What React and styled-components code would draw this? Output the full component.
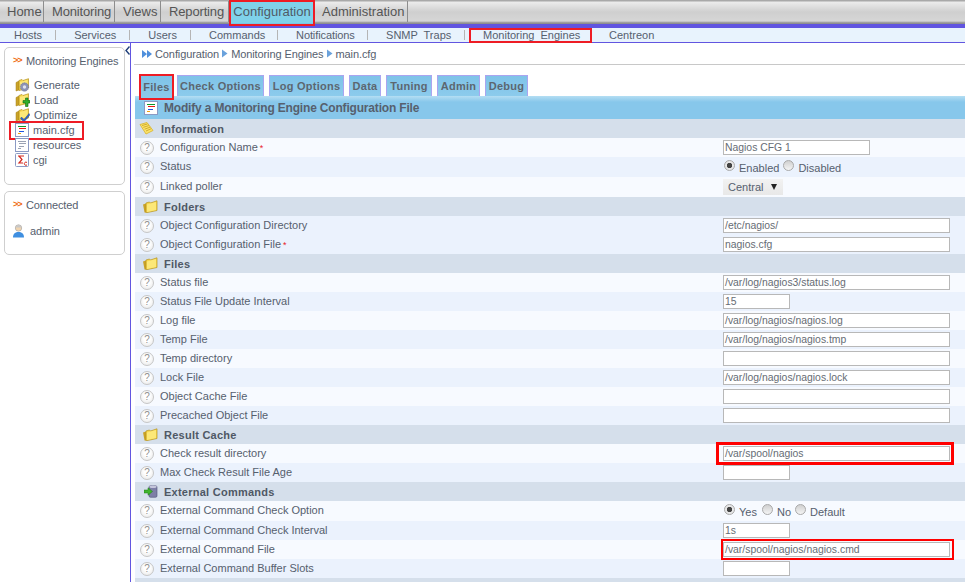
import React from "react";
import styled, { createGlobalStyle } from "styled-components";

const Global = createGlobalStyle`
  html, body { margin: 0; padding: 0; background: #fff; overflow: hidden; }
  body { font-family: "Liberation Sans", Arial, sans-serif; font-size: 11px; color: #56606e; }
  * { box-sizing: border-box; }
`;

const Page = styled.div`
  width: 965px;
  height: 582px;
  overflow: hidden;
  display: flex;
  flex-direction: column;
`;

/* top menu */
const TopBar = styled.nav`
  height: 24px;
  display: flex;
  padding-left: 7px;
  background: linear-gradient(#a9a9a9 0, #a9a9a9 1px, #ececec 2px, #cfcfcf 12px, #d6d6d6 21px, #8f8f8f 23px);
`;
const TopItem = styled.a`
  width: ${(p) => p.$w}px;
  height: 21px;
  margin: 1px 8px 0 0;
  font-size: 13px;
  line-height: 21px;
  letter-spacing: ${(p) => p.$ls ?? 0}px;
  white-space: nowrap;
  color: #555;
  border-right: 1px solid #8d8d8d;
`;
const TopActive = styled.a`
  width: 86px;
  height: 26px;
  margin: 0 7px 0 -8px;
  position: relative;
  z-index: 1;
  border: 2px solid #ee1c25;
  background: linear-gradient(#7fd2ea 0, #7fd2ea 21px, #6fb8e6 100%);
  color: #4f5a66;
  font-size: 13px;
  line-height: 20px;
  text-align: center;
`;
const Stripe = styled.div`
  height: 4px;
  background: #6155e0;
`;
const SubBar = styled.nav`
  height: 15px;
  display: flex;
  align-items: center;
  padding-left: 14px;
  background: #e8f3fd;
  border-bottom: 1px solid #6155e0;
`;
const SubItem = styled.a`
  width: ${(p) => (p.$w ? `${p.$w}px` : "auto")};
  font-size: 11px;
  letter-spacing: ${(p) => p.$ls ?? 0}px;
  color: #56606e;
  white-space: pre;
`;
const SubSep = styled.span`
  width: 1px;
  height: 10px;
  margin: 0 18px 0 13px;
  background: #b5b5b5;
`;
const SubBoxed = styled.a`
  width: 123px;
  height: 15px;
  margin: 0 17px 0 -14px;
  border: 2px solid #ee1c25;
  font-size: 11px;
  line-height: 11px;
  padding-left: 12px;
  white-space: pre;
  color: #56606e;
`;

/* body */
const Body = styled.div`
  flex: 1;
  min-height: 0;
  display: flex;
`;
const Side = styled.aside`
  width: 131px;
  flex: none;
  border-right: 1px solid #6155e0;
  padding: 4px 5px 0 4px;
  display: flex;
  flex-direction: column;
  gap: 6px;
  position: relative;
`;
const Collapse = styled.svg`
  position: absolute;
  right: 0;
  top: 3px;
`;
const Panel = styled.section`
  height: ${(p) => p.$h}px;
  border: 1px solid #cfcfcf;
  border-radius: 5px;
  padding: 5px 0 0 8px;
`;
const PanelTitle = styled.div`
  display: flex;
  align-items: center;
  gap: 5px;
  height: 15px;
  font-size: 11px;
  letter-spacing: -0.1px;
  color: #56606e;
  white-space: nowrap;
`;
const Chevrons = styled.span`
  width: 8px;
  color: #ef6a10;
  font-weight: bold;
  font-size: 9px;
  line-height: 11px;
  letter-spacing: -1px;
`;
const SideList = styled.ul`
  list-style: none;
  margin: 9px 0 0 2px;
  padding: 0;
`;
const SideItem = styled.li`
  height: 15px;
  display: flex;
  align-items: center;
  gap: 4px;
  font-size: 11px;
  color: #56606e;
  position: relative;
`;
const SideMark = styled.span`
  position: absolute;
  left: -6px;
  top: -1px;
  width: 75px;
  height: 19px;
  border: 2px solid #ee1c25;
`;
const UserRow = styled.div`
  display: flex;
  align-items: center;
  gap: 6px;
  margin: 12px 0 0 0;
  font-size: 11px;
  color: #56606e;
`;

const Main = styled.main`
  flex: 1;
  min-width: 0;
  padding-left: 3px;
`;
const Crumbs = styled.div`
  height: 22px;
  display: flex;
  align-items: center;
  gap: 3px;
  padding-left: 8px;
  border-bottom: 1px solid #c8c8c8;
  font-size: 11px;
  letter-spacing: -0.1px;
  color: #56606e;
`;
const Tabs = styled.div`
  display: flex;
  align-items: flex-start;
  gap: 5px;
  height: 31px;
  padding: 10px 0 0 5px;
  position: relative;
  z-index: 1;
`;
const Tab = styled.a`
  width: ${(p) => p.$w}px;
  height: 21px;
  background: linear-gradient(#7fc3e8, #8ccbec);
  border: 1px solid #aaa5f0;
  border-bottom: none;
  font-size: 11px;
  font-weight: bold;
  letter-spacing: 0.25px;
  line-height: 20px;
  text-align: center;
  color: #5c6670;
`;
const MarkedTab = styled(Tab)`
  height: 26px;
  margin: -1px -2px 0 0;
  border: 2px solid #ee1c25;
  line-height: 22px;
`;
const Header = styled.header`
  height: 23px;
  display: flex;
  align-items: center;
  gap: 6px;
  padding-left: 9px;
  margin-left: 1px;
  background: linear-gradient(#b4def3 0, #87c7eb 6px, #87c7eb 100%);
  font-size: 12px;
  font-weight: bold;
  letter-spacing: -0.18px;
  color: #56606e;
`;
const Form = styled.div`
  margin-left: 1px;
`;
const Section = styled.div`
  height: 19px;
  display: flex;
  align-items: center;
  background: #d5dfeb;
  font-size: 11px;
  font-weight: bold;
  color: #4f5865;
  letter-spacing: 0.25px;
`;
const SectionIcon = styled.span`
  width: ${(p) => p.$w ?? 29}px;
  padding-left: ${(p) => p.$pad ?? 8}px;
  display: flex;
`;
const Row = styled.div`
  height: ${(p) => p.$h ?? 19}px;
  display: flex;
  align-items: center;
  background: ${(p) => (p.$alt ? "#ebf2fd" : "#f7faff")};
  font-size: 11px;
  color: #56606e;
`;
const Help = styled.span`
  width: 14px;
  height: 14px;
  margin: 0 6px 0 5px;
  flex: none;
  border: 1px solid #c6c6c6;
  border-radius: 50%;
  background: radial-gradient(circle at 50% 40%, #fff 30%, #e6e6e6 100%);
  font-size: 10px;
  line-height: 12px;
  text-align: center;
  color: #909090;
`;
const Label = styled.span`
  width: 563px;
  flex: none;
  padding-bottom: 2px;
`;
const Req = styled.span`
  color: #e8222a;
  margin-left: 2px;
  font-size: 9px;
`;
const Field = styled.span`
  position: relative;
  display: block;
  width: ${(p) => p.$w}px;
  height: 15px;
  background: #fff;
  border: 1px solid #b8b8b8;
  padding-left: 1px;
  font-size: 10.4px;
  line-height: 13px;
  color: #666c74;
  white-space: nowrap;
`;
const FieldMark = styled.span`
  position: absolute;
  left: ${(p) => p.$l}px;
  right: ${(p) => p.$r}px;
  top: ${(p) => p.$t}px;
  bottom: ${(p) => p.$b}px;
  border: ${(p) => p.$bw}px solid #f00;
  pointer-events: none;
`;
const Radios = styled.span`
  display: flex;
  align-items: center;
`;
const RadioDot = styled.span`
  width: 11px;
  height: 11px;
  margin: -4px 4px 0 1px;
  flex: none;
  border-radius: 50%;
  border: 1px solid #a9a9a9;
  background: ${(p) =>
    p.$on
      ? "radial-gradient(circle, #444 0 2.4px, #e8e8e8 3px)"
      : "linear-gradient(#d0d0d0, #f4f4f4)"};
`;
const RadioText = styled.span`
  margin-right: ${(p) => p.$gap ?? 0}px;
  padding-top: 1px;
`;
const Select = styled.span`
  width: 60px;
  height: 16px;
  display: flex;
  align-items: center;
  gap: 8px;
  padding-left: 5px;
  background: linear-gradient(#f2f2f2, #e8e8e8);
  color: #56606e;
  font-size: 11px;
`;
const Caret = styled.span`
  width: 0;
  height: 0;
  border-left: 3.5px solid transparent;
  border-right: 3.5px solid transparent;
  border-top: 6px solid #222;
`;

/* icons */
const Folder = ({ badge }) => (
  <svg width="15" height="15" viewBox="0 0 15 15">
    <path d="M1 5.5 4 4v9l-3 1z" fill="#c9a227" stroke="#a5811c" strokeWidth=".5" />
    <path d="M4 3.5 7 2.5l1 1 5.5-1.8V11L4 13.5z" fill="#f8d84e" stroke="#b5921f" strokeWidth=".7" />
    <path d="M5 5l7.5-2v7L5 12z" fill="#fce878" />
    {badge === "gear" && (
      <g>
        <circle cx="9.5" cy="10" r="4.2" fill="#8d93b5" stroke="#666c8c" strokeWidth=".6" strokeDasharray="1.4 .7" />
        <circle cx="9.5" cy="10" r="1.7" fill="#dfe2ee" />
      </g>
    )}
    {badge === "plus" && (
      <path d="M8 8.5h2.5V6H13v2.5h2V11h-2v3.5h-2.5V11H8z" fill="#2fae2a" stroke="#14660f" strokeWidth=".6" />
    )}
    {badge === "check" && (
      <path d="M6.5 10l2.5 2.5L14 6.5l.8 1.5L9 15l-3.6-3.6z" fill="#2f62c9" stroke="#1b3f8c" strokeWidth=".4" />
    )}
  </svg>
);

const Doc = ({ kind }) => {
  const c =
    kind === "main"
      ? ["#0a9a2a", "#e81c10", "#1f55e0", "#f0a010"]
      : ["#9aa2b4", "#9aa2b4", "#9aa2b4", "#9aa2b4"];
  return (
    <svg width="14" height="14" viewBox="0 0 14 14" shapeRendering="crispEdges">
      <rect x=".5" y=".5" width="13" height="13" fill="#fff" stroke="#8b9ac4" />
      <rect x="3" y="3" width="8" height="1" fill={c[0]} />
      <rect x="4" y="5" width="7" height="1" fill={c[1]} />
      <rect x="4" y="8" width="5" height="1" fill={c[2]} />
      <rect x="3" y="10" width="3" height="1" fill={c[3]} />
    </svg>
  );
};

const CgiIcon = () => (
  <svg width="14" height="14" viewBox="0 0 14 14">
    <rect x=".5" y=".5" width="13" height="13" rx="1" fill="#fff" stroke="#8b9ac4" />
    <path d="M3 3h6M4 3l3 3.5L4 10h4" fill="none" stroke="#d42a20" strokeWidth="1.2" />
    <path d="M12 9.5a1.6 1.6 0 1 0 0 2.4" fill="none" stroke="#d42a20" strokeWidth="1" />
  </svg>
);

const UserIcon = () => (
  <svg width="11" height="14" viewBox="0 0 11 14">
    <circle cx="5.5" cy="4" r="3.2" fill="#f0d4b0" stroke="#a8a8a8" strokeWidth=".7" />
    <path d="M2.4 3.4A3.2 3.2 0 0 1 8.6 3.4z" fill="#c8c8c8" />
    <path d="M0 13.5C0 9.5 2.5 8 5.5 8s5.5 1.5 5.5 5.5z" fill="#3f8fe0" />
  </svg>
);

const Notes = () => (
  <svg width="15" height="13" viewBox="0 0 15 13">
    <path d="M1 2.5 8 .5l6 8-7 3.5z" fill="#fbe36a" stroke="#d8b22a" strokeWidth=".8" />
    <path d="M3 3.5l5.5-1.5M4.3 5.3l5.5-1.7M5.6 7.2l5.5-2M7 9l5-2.2" stroke="#c79f1e" strokeWidth=".8" />
  </svg>
);

const PlainFolder = () => (
  <svg width="15" height="13" viewBox="0 0 15 13">
    <path d="M0 4.5 3 3.5V12.5H1.5z" fill="#c9a227" />
    <path d="M3 3 6.5 2 7.5 3 14 .8V10.5L3 12.8z" fill="#f8d84e" stroke="#b5921f" strokeWidth=".7" />
    <path d="M4 4.5l9-2.4V10l-9 2z" fill="#fce878" />
  </svg>
);

const ExtIcon = () => (
  <svg width="14" height="13" viewBox="0 0 14 13">
    <rect x="5" y=".7" width="8" height="11.6" rx="1.5" fill="#7d7fa6" stroke="#4f5178" strokeWidth=".6" />
    <ellipse cx="9" cy="1.8" rx="3.6" ry="1.2" fill="#c5c6dc" />
    <path d="M0 5h4V2.8L8.5 6.5 4 10.2V8H0z" fill="#3fb52c" stroke="#1d7a14" strokeWidth=".5" />
  </svg>
);

const CrumbStart = () => (
  <svg width="10" height="10" viewBox="0 0 10 10">
    <path d="M0 1l5 4-5 4zM5 1l5 4-5 4z" fill="#4f8fdc" />
  </svg>
);
const CrumbArrow = () => (
  <svg width="6" height="9" viewBox="0 0 6 9">
    <path d="M0 .5 5.5 4.5 0 8.5z" fill="#6aa2dc" />
  </svg>
);

const fileRows = [
  ["Status file", "/var/log/nagios3/status.log", 227],
  ["Status File Update Interval", "15", 67],
  ["Log file", "/var/log/nagios/nagios.log", 227],
  ["Temp File", "/var/log/nagios/nagios.tmp", 227],
  ["Temp directory", "", 227],
  ["Lock File", "/var/log/nagios/nagios.lock", 227],
  ["Object Cache File", "", 227],
  ["Precached Object File", "", 227],
];

const TextRow = ({ label, value, w, alt, req, h, mark }) => (
  <Row $alt={alt} $h={h}>
    <Help>?</Help>
    <Label>
      {label}
      {req && <Req>*</Req>}
    </Label>
    <Field $w={w}>
      {value}
      {mark}
    </Field>
  </Row>
);

export default function App() {
  return (
    <Page>
      <Global />
      <TopBar>
        <TopItem $w={37}>Home</TopItem>
        <TopItem $w={63} $ls={-0.15}>Monitoring</TopItem>
        <TopItem $w={38}>Views</TopItem>
        <TopItem $w={60} $ls={-0.15}>Reporting</TopItem>
        <TopActive>Configuration</TopActive>
        <TopItem $w={86}>Administration</TopItem>
      </TopBar>
      <Stripe />
      <SubBar>
        <SubItem>Hosts</SubItem>
        <SubSep />
        <SubItem>Services</SubItem>
        <SubSep />
        <SubItem>Users</SubItem>
        <SubSep />
        <SubItem $w={55}>Commands</SubItem>
        <SubSep />
        <SubItem $w={58} $ls={-0.1}>Notifications</SubItem>
        <SubSep />
        <SubItem $w={65}>{"SNMP  Traps"}</SubItem>
        <SubSep />
        <SubBoxed>{"Monitoring  Engines"}</SubBoxed>
        <SubItem>Centreon</SubItem>
      </SubBar>
      <Body>
        <Side>
          <Collapse width="5" height="9" viewBox="0 0 5 9">
            <path d="M4.5.5 1 4.5l3.5 4" fill="none" stroke="#1f3f7a" strokeWidth="1.4" />
          </Collapse>
          <Panel $h={138}>
            <PanelTitle>
              <Chevrons>&gt;&gt;</Chevrons>
              Monitoring Engines
            </PanelTitle>
            <SideList>
              <SideItem><Folder badge="gear" />Generate</SideItem>
              <SideItem><Folder badge="plus" />Load</SideItem>
              <SideItem><Folder badge="check" />Optimize</SideItem>
              <SideItem><SideMark /><Doc kind="main" />main.cfg</SideItem>
              <SideItem><Doc kind="res" />resources</SideItem>
              <SideItem><CgiIcon />cgi</SideItem>
            </SideList>
          </Panel>
          <Panel $h={64}>
            <PanelTitle>
              <Chevrons>&gt;&gt;</Chevrons>
              Connected
            </PanelTitle>
            <UserRow><UserIcon />admin</UserRow>
          </Panel>
        </Side>
        <Main>
          <Crumbs>
            <CrumbStart />
            Configuration
            <CrumbArrow />
            Monitoring Engines
            <CrumbArrow />
            main.cfg
          </Crumbs>
          <Tabs>
            <MarkedTab $w={35}>Files</MarkedTab>
            <Tab $w={87}>Check Options</Tab>
            <Tab $w={75}>Log Options</Tab>
            <Tab $w={32}>Data</Tab>
            <Tab $w={46}>Tuning</Tab>
            <Tab $w={43}>Admin</Tab>
            <Tab $w={43}>Debug</Tab>
          </Tabs>
          <Header>
            <Doc kind="main" />
            Modify a Monitoring Engine Configuration File
          </Header>
          <Form>
            <Section><SectionIcon $w={26} $pad={4}><Notes /></SectionIcon>Information</Section>
            <TextRow label="Configuration Name" req value="Nagios CFG 1" w={147} />
            <Row $alt $h={20}>
              <Help>?</Help>
              <Label>Status</Label>
              <Radios>
                <RadioDot $on />
                <RadioText $gap={3}>Enabled</RadioText>
                <RadioDot />
                <RadioText>Disabled</RadioText>
              </Radios>
            </Row>
            <Row $h={20}>
              <Help>?</Help>
              <Label>Linked poller</Label>
              <Select>Central <Caret /></Select>
            </Row>
            <Section><SectionIcon><PlainFolder /></SectionIcon>Folders</Section>
            <TextRow alt label="Object Configuration Directory" value="/etc/nagios/" w={227} />
            <TextRow alt label="Object Configuration File" req value="nagios.cfg" w={227} />
            <Section><SectionIcon><PlainFolder /></SectionIcon>Files</Section>
            {fileRows.map(([label, value, w], i) => (
              <TextRow key={label} label={label} value={value} w={w} alt={i % 2 === 1} />
            ))}
            <Section><SectionIcon><PlainFolder /></SectionIcon>Result Cache</Section>
            <TextRow
              label="Check result directory"
              value="/var/spool/nagios"
              w={227}
              mark={<FieldMark $l={-8} $r={-5} $t={-5} $b={-5} $bw={3} />}
            />
            <TextRow alt label="Max Check Result File Age" value="" w={67} />
            <Section><SectionIcon $pad={9}><ExtIcon /></SectionIcon>External Commands</Section>
            <Row $h={20}>
              <Help>?</Help>
              <Label>External Command Check Option</Label>
              <Radios>
                <RadioDot $on />
                <RadioText $gap={4}>Yes</RadioText>
                <RadioDot />
                <RadioText $gap={3}>No</RadioText>
                <RadioDot />
                <RadioText>Default</RadioText>
              </Radios>
            </Row>
            <TextRow alt label="External Command Check Interval" value="1s" w={67} />
            <TextRow
              label="External Command File"
              value="/var/spool/nagios/nagios.cmd"
              w={227}
              mark={<FieldMark $l={-3} $r={-5} $t={-4} $b={-4} $bw={2} />}
            />
            <TextRow alt label="External Command Buffer Slots" value="" w={67} />
            <Section />
          </Form>
        </Main>
      </Body>
    </Page>
  );
}
